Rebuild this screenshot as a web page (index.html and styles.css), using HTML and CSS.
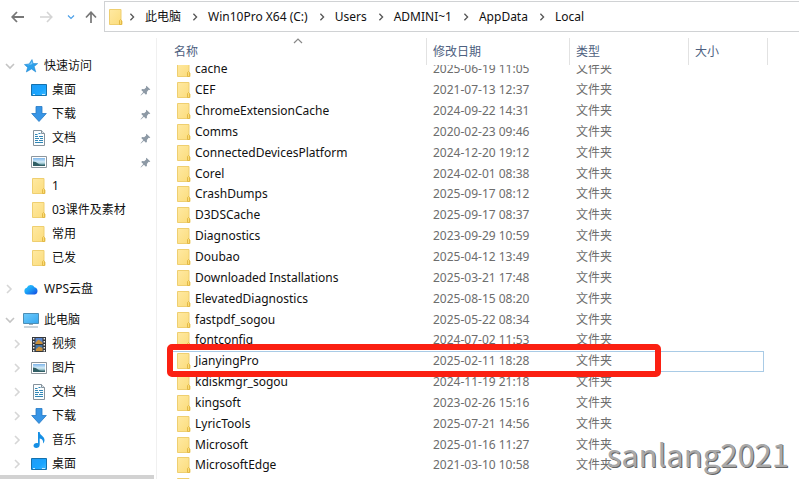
FILE: index.html
```html
<!DOCTYPE html>
<html lang="zh-CN">
<head>
<meta charset="utf-8">
<meta name="viewport" content="width=device-width, initial-scale=1">
<title>Local</title>
<link rel="stylesheet" href="styles.css">
</head>
<body>
<svg class="sprite" aria-hidden="true">
  <defs>
    <linearGradient id="g-folder" x1="0" y1="0" x2="1" y2="1"><stop offset="0" stop-color="#ffe9a2"/><stop offset="1" stop-color="#fbdc7b"/></linearGradient>
    <linearGradient id="g-cloud" x1="0" y1="0" x2="1" y2="1"><stop offset="0" stop-color="#2fd0ff"/><stop offset=".5" stop-color="#1a9af5"/><stop offset="1" stop-color="#1545e0"/></linearGradient>
    <linearGradient id="g-desk" x1="0" y1="0" x2="1" y2="1"><stop offset="0" stop-color="#1e9bf5"/><stop offset=".6" stop-color="#19a5ff"/><stop offset="1" stop-color="#42bbff"/></linearGradient>
    <linearGradient id="g-screen" x1="0" y1="0" x2="1" y2="1"><stop offset="0" stop-color="#6fcbfb"/><stop offset="1" stop-color="#36a7f0"/></linearGradient>
    <linearGradient id="g-photo" x1="0" y1="0" x2="0" y2="1"><stop offset="0" stop-color="#7fb6ea"/><stop offset=".5" stop-color="#d4ecf7"/><stop offset="1" stop-color="#3f7f86"/></linearGradient>
  </defs>
  <symbol id="folder" viewBox="0 0 14 16"><path d="M.5.500h11.500v11l1 .5v3.500H.5z" fill="url(#g-folder)" stroke="#efcf70"/><path d="M10.500 15.500v-4l1-1 1 1v4z" fill="#fbdc75" stroke="#e3b947"/></symbol>
  <symbol id="right" viewBox="0 0 8 10"><path d="M2 1l4 4-4 4" fill="none" stroke="currentColor" stroke-width="1.600"/></symbol>
  <symbol id="down" viewBox="0 0 10 8"><path d="M1 2l4 4 4-4" fill="none" stroke="currentColor" stroke-width="1.600"/></symbol>
  <symbol id="star" viewBox="0 0 14 14"><path d="M8 .5l1.200 4 4.500.1-3.500 2.900 1.600 5.500L7.500 10 2.300 13l1.300-4.600L.4 5.600l4.700-.7z" fill="#2da0ea" stroke="#1681cf" stroke-width=".5"/><path d="M8 2l.5 3-4 1.200-2-.3 3.300-.5z" fill="#7dcbfb"/></symbol>
  <symbol id="desktop" viewBox="0 0 16 12"><path d="M.5.500h15v11H.5z" fill="url(#g-desk)" stroke="#1471ad"/><path d="M2 10.500h2m7 0h3" stroke="#c7ecff" stroke-width="1"/></symbol>
  <symbol id="download" viewBox="0 0 16 16"><path d="M5 .5h6v7h4.300L8 15.500.7 7.500H5z" fill="#3795e6" stroke="#2479c4" stroke-width=".8"/></symbol>
  <symbol id="document" viewBox="0 0 14 16"><path d="M1.500.5h8l3 3v12h-11z" fill="#fbfdfe" stroke="#85929c"/><path d="M9.500.5v3h3" fill="#dce4e9" stroke="#85929c"/><path d="M3 4.500h2.500M6.500 3.500h2M3 6.500h3M7 6.500h4M3 8.500h4M8 8.500h3M3 10.500h3M7 10.500h4M3 12.500h8" stroke="#3187b6"/></symbol>
  <symbol id="picture" viewBox="0 0 16 12"><path d="M.5.500h15v11H.5z" fill="#fff" stroke="#8d969d"/><path d="M2 2h12v8H2z" fill="url(#g-photo)"/><path d="M2 5.500q3 0 5 2t7 1V10H2z" fill="#315f65"/></symbol>
  <symbol id="pin" viewBox="0 0 12 12"><path d="M7 .8L11.300 5l-1.200.5-.7-.2-1.900 2.200.1 2L6.500 10.600 4.300 8.400 1 11.500l-.4-.4L3.600 7.700 1.300 5.500l1.200-1.100 2 .1L6.700 2.600l-.2-.8z" fill="#8d99a5"/></symbol>
  <symbol id="cloud" viewBox="0 0 15 12"><path d="M4 11.500a3.500 3.500 0 0 1-.7-6.800A4.200 4.200 0 0 1 11 4.300a3.700 3.700 0 0 1 .3 7.200z" fill="url(#g-cloud)"/></symbol>
  <symbol id="computer" viewBox="0 0 16 15"><path d="M.5.500h15v10H.5z" fill="url(#g-screen)" stroke="#4d8eb5"/><path d="M6 11.500h4M1 14h14" stroke="#9aabb8" stroke-width="1.200"/></symbol>
  <symbol id="video" viewBox="0 0 14 15"><path d="M0 0h14v15H0z" fill="#34373b"/><path d="M3.500 1h7v6h-7z" fill="#5a86ce"/><path d="M3.500 8h7v6h-7z" fill="#3f74a9"/><path d="M3.500 5.500l3-3 4 3V7h-7zM4 12l3-2.500 3.500 1.500v3H4z" fill="#c98f3a"/><path d="M1.700 1v14M12.300 1v14" stroke="#f2f2f2" stroke-width="1.400" stroke-dasharray="1.500 1.500"/></symbol>
  <symbol id="music" viewBox="0 0 12 16"><path d="M5 0h1.700c0 3.500 4.800 4 4.800 8 0 1.500-.6 2.500-1.500 3.500.6-3-.8-4.500-3.300-5v6.300C6.700 15 5 16 3.200 16 1.500 16 .5 15 .5 13.800c0-1.800 2-3.200 4.500-2.600z" fill="#168fe4"/></symbol>
</svg>

<div class="window">
  <header class="toolbar">
    <nav class="history" aria-label="导航">
      <button type="button" aria-label="后退"><svg width="14" height="12" viewBox="0 0 14 12"><path d="M13 6H1.500M6 1L1.200 6 6 11" fill="none" stroke="#777" stroke-width="1.800"/></svg></button>
      <button type="button" aria-label="前进" disabled><svg width="14" height="12" viewBox="0 0 14 12"><path d="M1 6h11.500M8 1l4.800 5L8 11" fill="none" stroke="#d4d4d4" stroke-width="1.600"/></svg></button>
      <button type="button" class="recent" aria-label="最近位置"><svg width="8" height="6"><use href="#down"/></svg></button>
      <button type="button" aria-label="向上"><svg width="12" height="12" viewBox="0 0 12 12"><path d="M6 12V1.500M1 6.500L6 1.200l5 5.300" fill="none" stroke="#777" stroke-width="1.700"/></svg></button>
    </nav>
    <nav class="address" aria-label="地址">
      <svg class="folder" width="14" height="16"><use href="#folder"/></svg>
      <svg width="8" height="8"><use href="#right"/></svg><a href="#pc">此电脑</a>
      <svg width="8" height="8"><use href="#right"/></svg><a href="#c">Win10Pro X64 (C:)</a>
      <svg width="8" height="8"><use href="#right"/></svg><a href="#users">Users</a>
      <svg width="8" height="8"><use href="#right"/></svg><a href="#admin">ADMINI~1</a>
      <svg width="8" height="8"><use href="#right"/></svg><a href="#appdata">AppData</a>
      <svg width="8" height="8"><use href="#right"/></svg><a href="#local">Local</a>
    </nav>
  </header>

  <div class="body">
    <aside class="sidebar">
      <nav class="tree" aria-label="文件夹">
        <ul>
          <li><a href="#quick"><svg class="twist open" width="10" height="8"><use href="#down"/></svg><svg class="icon" width="14" height="14"><use href="#star"/></svg>快速访问</a>
            <ul>
              <li><a href="#q1"><svg class="icon" width="16" height="12"><use href="#desktop"/></svg>桌面<svg class="pin" width="11" height="11"><use href="#pin"/></svg></a></li>
              <li><a href="#q2"><svg class="icon" width="16" height="16"><use href="#download"/></svg>下载<svg class="pin" width="11" height="11"><use href="#pin"/></svg></a></li>
              <li><a href="#q3"><svg class="icon" width="16" height="16"><use href="#document"/></svg>文档<svg class="pin" width="11" height="11"><use href="#pin"/></svg></a></li>
              <li><a href="#q4"><svg class="icon" width="16" height="12"><use href="#picture"/></svg>图片<svg class="pin" width="11" height="11"><use href="#pin"/></svg></a></li>
              <li><a href="#q5"><svg class="icon" width="16" height="16"><use href="#folder"/></svg>1</a></li>
              <li><a href="#q6"><svg class="icon" width="16" height="16"><use href="#folder"/></svg>03课件及素材</a></li>
              <li><a href="#q7"><svg class="icon" width="16" height="16"><use href="#folder"/></svg>常用</a></li>
              <li><a href="#q8"><svg class="icon" width="16" height="16"><use href="#folder"/></svg>已发</a></li>
            </ul>
          </li>
          <li><a href="#wps"><svg class="twist" width="8" height="10"><use href="#right"/></svg><svg class="icon" width="16" height="12"><use href="#cloud"/></svg>WPS云盘</a></li>
          <li><a href="#pc"><svg class="twist open" width="10" height="8"><use href="#down"/></svg><svg class="icon" width="16" height="15"><use href="#computer"/></svg>此电脑</a>
            <ul>
              <li><a href="#p1"><svg class="twist" width="8" height="10"><use href="#right"/></svg><svg class="icon" width="16" height="15"><use href="#video"/></svg>视频</a></li>
              <li><a href="#p2"><svg class="twist" width="8" height="10"><use href="#right"/></svg><svg class="icon" width="16" height="12"><use href="#picture"/></svg>图片</a></li>
              <li><a href="#p3"><svg class="twist" width="8" height="10"><use href="#right"/></svg><svg class="icon" width="16" height="16"><use href="#document"/></svg>文档</a></li>
              <li><a href="#p4"><svg class="twist" width="8" height="10"><use href="#right"/></svg><svg class="icon" width="16" height="16"><use href="#download"/></svg>下载</a></li>
              <li><a href="#p5"><svg class="twist" width="8" height="10"><use href="#right"/></svg><svg class="icon" width="16" height="16"><use href="#music"/></svg>音乐</a></li>
              <li><a href="#p6"><svg class="twist" width="8" height="10"><use href="#right"/></svg><svg class="icon" width="16" height="12"><use href="#desktop"/></svg>桌面</a></li>
            </ul>
          </li>
        </ul>
      </nav>
      <div class="scrollbar"></div>
    </aside>

    <main class="files" id="files">
      <table>
        <colgroup><col class="c-name"><col class="c-date"><col class="c-type"><col class="c-size"></colgroup>
        <thead>
          <tr>
            <th><svg class="sort" width="10" height="6" viewBox="0 0 10 6"><path d="M1 5l4-4 4 4" fill="none" stroke="#888" stroke-width="1.200"/></svg><button type="button">名称</button></th>
            <th><button type="button">修改日期</button></th>
            <th><button type="button">类型</button></th>
            <th><button type="button">大小</button></th>
          </tr>
        </thead>
        <tbody>
          <tr><td><svg width="14" height="16"><use href="#folder"/></svg>cache</td><td>2025-06-19 11:05</td><td>文件夹</td><td></td></tr>
          <tr><td><svg width="14" height="16"><use href="#folder"/></svg>CEF</td><td>2021-07-13 12:37</td><td>文件夹</td><td></td></tr>
          <tr><td><svg width="14" height="16"><use href="#folder"/></svg>ChromeExtensionCache</td><td>2024-09-22 14:31</td><td>文件夹</td><td></td></tr>
          <tr><td><svg width="14" height="16"><use href="#folder"/></svg>Comms</td><td>2020-02-23 09:46</td><td>文件夹</td><td></td></tr>
          <tr><td><svg width="14" height="16"><use href="#folder"/></svg>ConnectedDevicesPlatform</td><td>2024-12-20 19:12</td><td>文件夹</td><td></td></tr>
          <tr><td><svg width="14" height="16"><use href="#folder"/></svg>Corel</td><td>2024-02-01 08:38</td><td>文件夹</td><td></td></tr>
          <tr><td><svg width="14" height="16"><use href="#folder"/></svg>CrashDumps</td><td>2025-09-17 08:12</td><td>文件夹</td><td></td></tr>
          <tr><td><svg width="14" height="16"><use href="#folder"/></svg>D3DSCache</td><td>2025-09-17 08:37</td><td>文件夹</td><td></td></tr>
          <tr><td><svg width="14" height="16"><use href="#folder"/></svg>Diagnostics</td><td>2023-09-29 10:59</td><td>文件夹</td><td></td></tr>
          <tr><td><svg width="14" height="16"><use href="#folder"/></svg>Doubao</td><td>2025-04-12 13:49</td><td>文件夹</td><td></td></tr>
          <tr><td><svg width="14" height="16"><use href="#folder"/></svg>Downloaded Installations</td><td>2025-03-21 17:48</td><td>文件夹</td><td></td></tr>
          <tr><td><svg width="14" height="16"><use href="#folder"/></svg>ElevatedDiagnostics</td><td>2025-08-15 08:20</td><td>文件夹</td><td></td></tr>
          <tr><td><svg width="14" height="16"><use href="#folder"/></svg>fastpdf_sogou</td><td>2025-05-22 08:34</td><td>文件夹</td><td></td></tr>
          <tr><td><svg width="14" height="16"><use href="#folder"/></svg>fontconfig</td><td>2024-07-02 11:53</td><td>文件夹</td><td></td></tr>
          <tr class="focused"><td><svg width="14" height="16"><use href="#folder"/></svg>JianyingPro<span class="marker"></span></td><td>2025-02-11 18:28</td><td>文件夹</td><td></td></tr>
          <tr><td><svg width="14" height="16"><use href="#folder"/></svg>kdiskmgr_sogou</td><td>2024-11-19 21:18</td><td>文件夹</td><td></td></tr>
          <tr><td><svg width="14" height="16"><use href="#folder"/></svg>kingsoft</td><td>2023-02-26 15:16</td><td>文件夹</td><td></td></tr>
          <tr><td><svg width="14" height="16"><use href="#folder"/></svg>LyricTools</td><td>2025-07-21 14:56</td><td>文件夹</td><td></td></tr>
          <tr><td><svg width="14" height="16"><use href="#folder"/></svg>Microsoft</td><td>2025-01-16 11:27</td><td>文件夹</td><td></td></tr>
          <tr><td><svg width="14" height="16"><use href="#folder"/></svg>MicrosoftEdge</td><td>2021-03-10 10:58</td><td>文件夹</td><td></td></tr>
          <tr><td><svg width="14" height="16"><use href="#folder"/></svg></td><td></td><td></td><td></td></tr>
        </tbody>
      </table>
    </main>
  </div>
  <div class="watermark">sanlang2021</div>
</div>
<script src="script.js"></script>
</body>
</html>
```
FILE: styles.css
```css
* { box-sizing: border-box; }

body {
  margin: 0;
  background: #fff;
  color: #111;
  font: 12px/18px "Noto Sans", "Noto Sans CJK SC", sans-serif;
}

.sprite { position: absolute; width: 0; height: 0; }
svg { display: block; flex: none; }
a { color: inherit; text-decoration: none; }
button { padding: 0; border: 0; background: none; font: inherit; color: inherit; }
ul { margin: 0; padding: 0; list-style: none; }

.window {
  position: relative;
  display: flex;
  flex-direction: column;
  height: 100vh;
  overflow: hidden;
}

/* Toolbar */
.toolbar { display: flex; padding-top: 1px; }
.history {
  display: flex;
  align-items: center;
  gap: 14px;
  width: 104px;
  padding-left: 11px;
}
.history .recent { color: #4a9fe8; margin-right: -4px; }
.address {
  flex: 1;
  display: flex;
  align-items: center;
  height: 31px;
  padding-left: 4px;
  border: 1px solid #d0d2d4;
  border-right: 0;
  white-space: nowrap;
}
.address svg { margin: 0 9px 0 10px; color: #555; }
.address .folder { margin: 0; }
.address .folder + svg { margin-left: 5px; }

/* Panes */
.body { flex: 1; display: flex; min-height: 0; padding-top: 6px; }
.sidebar {
  flex: none;
  display: flex;
  flex-direction: column;
  width: 157px;
  border-right: 1px solid #f0f0f0;
}
.tree { flex: 1; overflow: hidden; padding-top: 16px; }
.tree > ul > li + li { margin-top: 7px; }
.tree a {
  position: relative;
  display: flex;
  align-items: center;
  height: 24px;
  padding-left: 23px;
  white-space: nowrap;
}
.tree ul ul a { padding-left: 31px; }
.tree .icon { width: 16px; margin-right: 5px; }
.twist { position: absolute; left: 5px; color: #d6d6d6; }
.twist.open { color: #c4c4c4; }
.tree ul ul .twist { left: 13px; }
.pin { margin-left: auto; margin-right: 5px; }
.scrollbar { width: 154px; height: 4px; background: #d2d2d2; }

/* File list */
.files { flex: 1; overflow: hidden; padding-left: 6px; }
table {
  width: 605px;
  height: 465px;
  border-collapse: separate;
  border-spacing: 0;
  table-layout: fixed;
}
.c-name { width: 264px; }
.c-date { width: 143px; }
.c-type { width: 119px; }
.c-size { width: 79px; }
th {
  position: sticky;
  top: 0;
  z-index: 1;
  height: 27px;
  padding: 0 0 0 6px;
  border-right: 1px solid #e2e2e2;
  background: #fff;
  color: #4d6080;
  font-weight: 400;
  text-align: left;
}
th:first-child { padding-left: 11px; }
.sort { position: absolute; top: 0; left: 130px; }
td { padding: 0 0 0 6px; color: #6d6d6d; line-height: 16px; white-space: nowrap; }
td:first-child { padding-left: 14px; color: #111; }
td svg { display: inline-block; margin-right: 4px; vertical-align: -4px; }
.focused { position: relative; }
.focused::after {
  content: "";
  position: absolute;
  inset: 0 4px 0 8px;
  border: 1px solid #a9cbe6;
}
.marker {
  position: absolute;
  z-index: 1;
  inset: -7px 107px -5px 4px;
  border: 6px solid #fb2012;
  border-radius: 5px;
}

.watermark {
  position: absolute;
  right: 10px;
  bottom: 3px;
  color: #a9a9a9;
  font: 400 31px/45px "Noto Sans CJK SC", sans-serif;
  text-shadow: 1px 1px 0 #666;
}
```
FILE: script.js
```js
document.getElementById("files").scrollTop = 6;
```
